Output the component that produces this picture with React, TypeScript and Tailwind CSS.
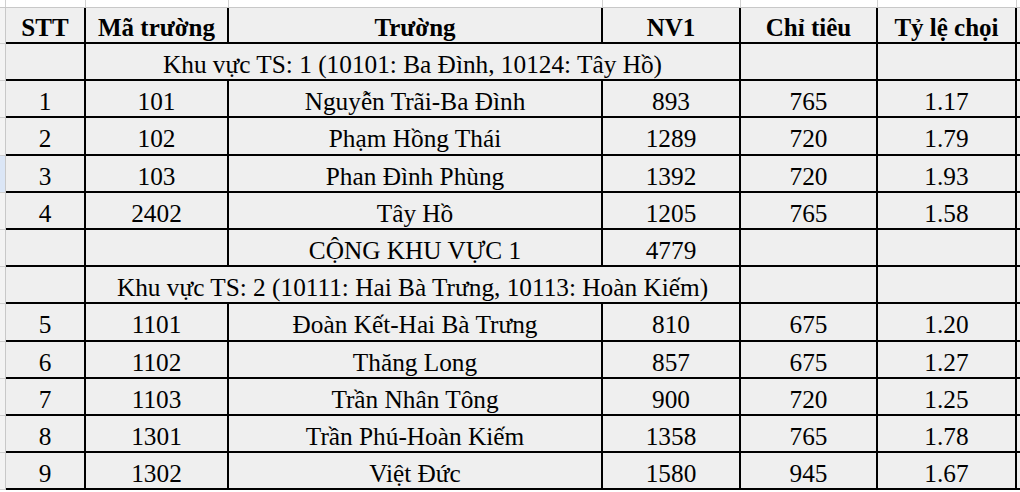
import React from 'react';

type Row =
  | { kind: 'data'; stt: string; ma: string; truong: string; nv1: string; chiTieu: string; tyLe: string; h: number }
  | { kind: 'area'; label: string; h: number }
  | { kind: 'total'; label: string; nv1: string; h: number };

const rows: Row[] = [
  { kind: 'area', label: 'Khu vực TS: 1 (10101: Ba Đình, 10124: Tây Hồ)', h: 37 },
  { kind: 'data', stt: '1', ma: '101', truong: 'Nguyễn Trãi-Ba Đình', nv1: '893', chiTieu: '765', tyLe: '1.17', h: 37 },
  { kind: 'data', stt: '2', ma: '102', truong: 'Phạm Hồng Thái', nv1: '1289', chiTieu: '720', tyLe: '1.79', h: 38 },
  { kind: 'data', stt: '3', ma: '103', truong: 'Phan Đình Phùng', nv1: '1392', chiTieu: '720', tyLe: '1.93', h: 37 },
  { kind: 'data', stt: '4', ma: '2402', truong: 'Tây Hồ', nv1: '1205', chiTieu: '765', tyLe: '1.58', h: 37 },
  { kind: 'total', label: 'CỘNG KHU VỰC 1', nv1: '4779', h: 37 },
  { kind: 'area', label: 'Khu vực TS: 2 (10111: Hai Bà Trưng, 10113: Hoàn Kiếm)', h: 37 },
  { kind: 'data', stt: '5', ma: '1101', truong: 'Đoàn Kết-Hai Bà Trưng', nv1: '810', chiTieu: '675', tyLe: '1.20', h: 38 },
  { kind: 'data', stt: '6', ma: '1102', truong: 'Thăng Long', nv1: '857', chiTieu: '675', tyLe: '1.27', h: 37 },
  { kind: 'data', stt: '7', ma: '1103', truong: 'Trần Nhân Tông', nv1: '900', chiTieu: '720', tyLe: '1.25', h: 37 },
  { kind: 'data', stt: '8', ma: '1301', truong: 'Trần Phú-Hoàn Kiếm', nv1: '1358', chiTieu: '765', tyLe: '1.78', h: 37 },
  { kind: 'data', stt: '9', ma: '1302', truong: 'Việt Đức', nv1: '1580', chiTieu: '945', tyLe: '1.67', h: 37 },
];

const gridCols = 'grid grid-cols-[80px_143px_374px_138px_137px_139px]';

function Cell({ children, className = '' }: { children?: React.ReactNode; className?: string }) {
  return (
    <div className={`flex items-center justify-center whitespace-nowrap border-r-2 border-black pt-[6px] ${className}`}>
      {children}
    </div>
  );
}

function HeadCell({ children }: { children: React.ReactNode }) {
  return (
    <div className="flex items-center justify-center whitespace-nowrap border-r-2 border-black pt-[5px]">
      {children}
    </div>
  );
}

export default function App() {
  return (
    <div className="h-[492px] w-[1020px] overflow-hidden bg-white font-['Liberation_Serif','Times_New_Roman',serif] leading-none text-black">
      {/* sheet column-header strip */}
      <div className="flex h-[8px] border-b border-[#c8c8c8] bg-white">
        <div className="w-[6px] border-r border-[#d0d0d0]" />
        <div className="w-[80px] border-r border-[#d0d0d0]" />
        <div className="w-[143px] border-r border-[#d0d0d0]" />
        <div className="w-[374px] border-r border-[#d0d0d0]" />
        <div className="w-[138px] border-r border-[#d0d0d0]" />
        <div className="w-[137px] border-r border-[#d0d0d0]" />
        <div className="w-[139px] border-r border-[#d0d0d0]" />
      </div>

      <div className="flex">
        {/* row-header strip */}
        <div className="flex w-[6px] flex-col border-r border-[#c8c8c8] bg-[#f3f3f3]">
          <div className="h-[36px] border-b border-[#cfcfcf]" />
          {rows.map((r, i) => (
            <div
              key={i}
              style={{ height: r.h }}
              className={`border-b border-[#cfcfcf] ${i === 3 ? 'bg-[#dbe6f6]' : ''}`}
            />
          ))}
        </div>

        <div className="flex w-[1014px] flex-col bg-[#efefef]">
          <div className={`${gridCols} h-[36px] border-b-2 border-black text-[25px] font-bold`}>
            <HeadCell>STT</HeadCell>
            <HeadCell>Mã trường</HeadCell>
            <HeadCell>Trường</HeadCell>
            <HeadCell>NV1</HeadCell>
            <HeadCell>Chỉ tiêu</HeadCell>
            <HeadCell>Tỷ lệ chọi</HeadCell>
          </div>

          {rows.map((r, i) => (
            <div key={i} className={`${gridCols} border-b-2 border-black text-[25.3px]`} style={{ height: r.h }}>
              {r.kind === 'data' && (
                <>
                  <Cell>{r.stt}</Cell>
                  <Cell>{r.ma}</Cell>
                  <Cell>{r.truong}</Cell>
                  <Cell>{r.nv1}</Cell>
                  <Cell>{r.chiTieu}</Cell>
                  <Cell>{r.tyLe}</Cell>
                </>
              )}
              {r.kind === 'area' && (
                <>
                  <Cell />
                  <Cell className="col-span-3">{r.label}</Cell>
                  <Cell />
                  <Cell />
                </>
              )}
              {r.kind === 'total' && (
                <>
                  <Cell />
                  <Cell />
                  <Cell>{r.label}</Cell>
                  <Cell>{r.nv1}</Cell>
                  <Cell />
                  <Cell />
                </>
              )}
            </div>
          ))}
        </div>
      </div>
    </div>
  );
}
